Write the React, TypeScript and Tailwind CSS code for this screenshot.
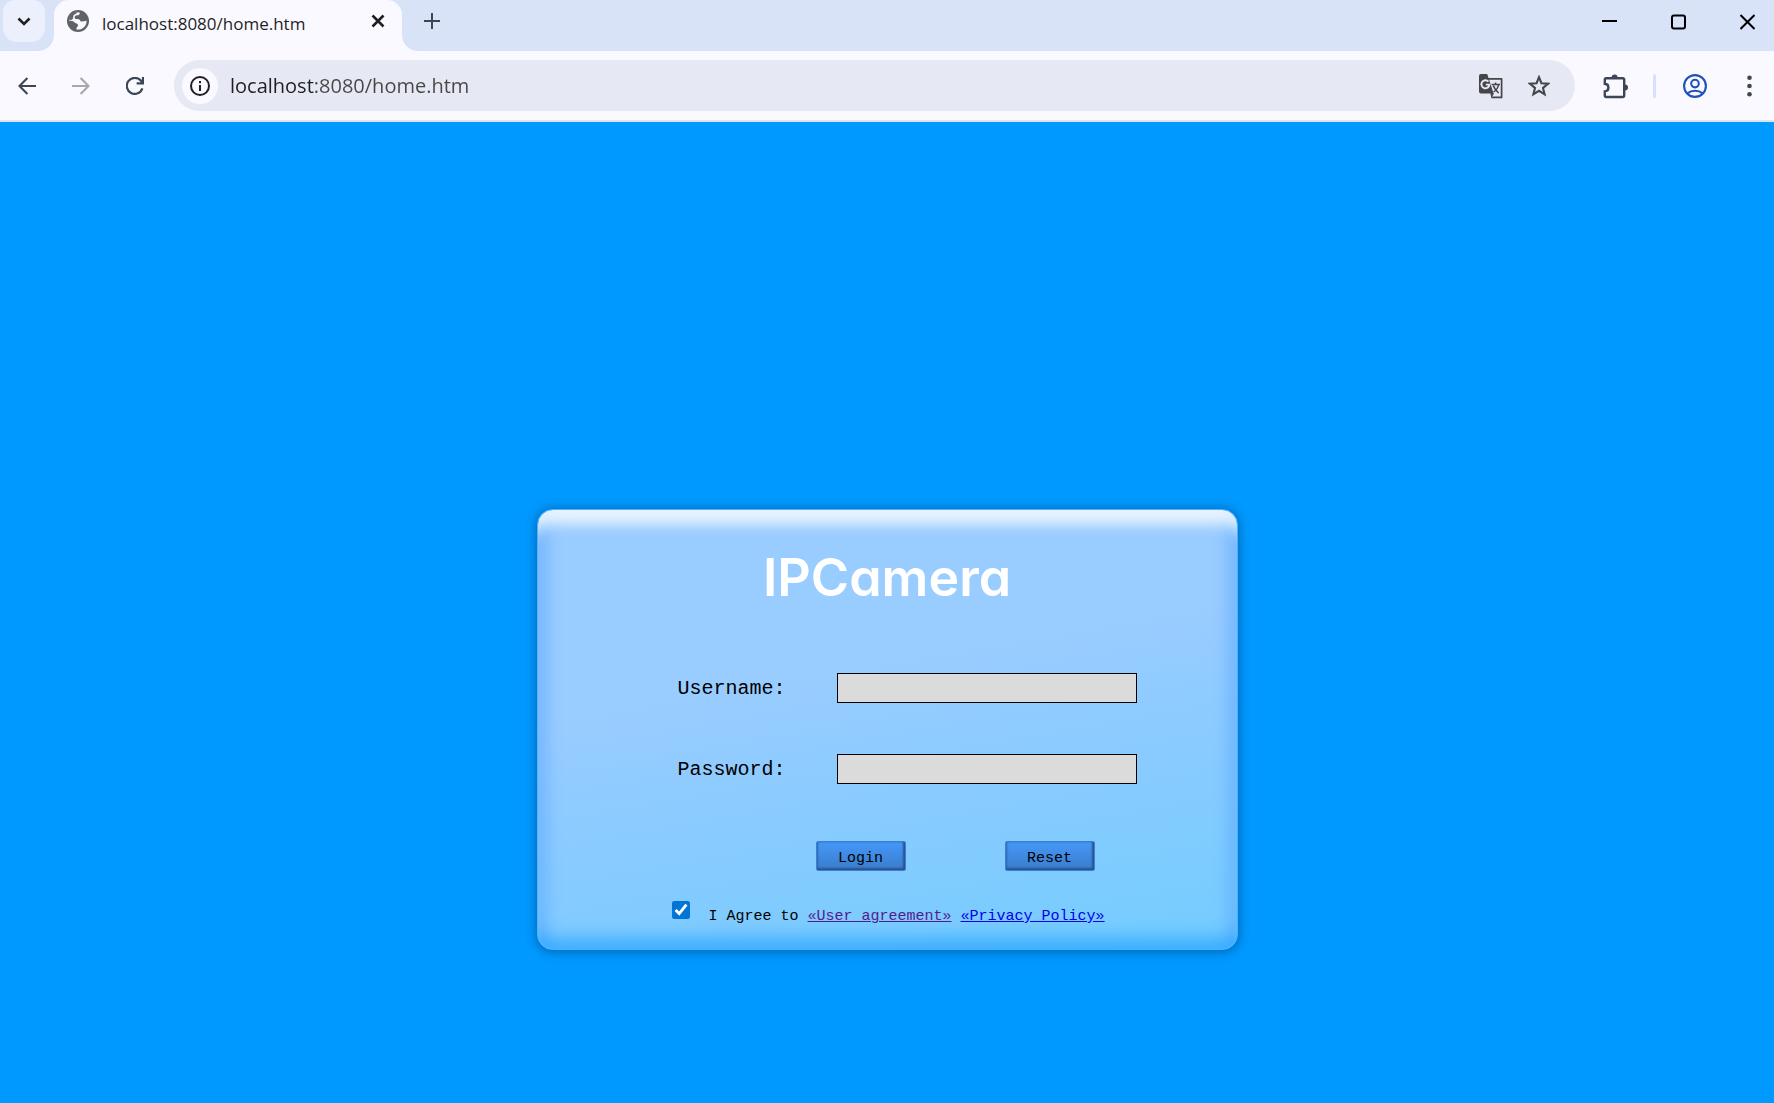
import React from "react";

const stroke = { fill: "none", stroke: "currentColor" } as const;

function Globe() {
  return (
    <svg width="22" height="22" viewBox="2 2 20 20">
      <path
        d="M12 2C6.48 2 2 6.48 2 12s4.48 10 10 10 10-4.48 10-10S17.52 2 12 2zm-1 17.93c-3.95-.49-7-3.85-7-7.93 0-.62.08-1.21.21-1.79L9 15v1c0 1.1.9 2 2 2v1.93zm6.9-2.54c-.26-.81-1-1.39-1.9-1.39h-1v-3c0-.55-.45-1-1-1H8v-2h2c.55 0 1-.45 1-1V7h2c1.1 0 2-.9 2-2v-.41c2.93 1.19 5 4.06 5 7.41 0 2.08-.8 3.97-2.1 5.39z"
        fill="none"
      />
      <circle cx="12" cy="12" r="10" fill="#5f6368" />
      <path
        d="M13.4 4.2C14 5.6 13 6.8 11 6.8C9.4 7 8.8 8 9 9C9.2 10.2 10.2 10.2 11.4 10.2C13.4 10.2 14 11.2 14.4 12.4C15.6 12.6 17.6 12.4 19.8 11.8C20 15.6 17.2 19.2 13.2 19.8C12 20 11 19.9 10.4 19.6C10.8 18.4 10.6 17.6 11.8 16.8C12.6 15.6 11.6 14.4 10.2 14C8.6 13.8 8.6 12.4 7 12L4 11.8C4.2 7.6 7.4 4 12 4Z"
        fill="#faf9ff"
      />
      <path d="M4 11.2C4 7 7.6 4 11.4 4C10.8 5.2 9.6 5.6 8.6 6.2C7.2 7.2 8 9 7.2 10.2C6.4 11 5.2 11.4 4 11.2Z" fill="#5f6368" />
    </svg>
  );
}

function Translate() {
  return (
    <svg width="26" height="26" viewBox="0 0 26 26">
      <path d="M10 5.8H23.6V24.4H13.4" fill="none" stroke="#444649" strokeWidth="1.7" strokeLinejoin="round" />
      <path d="M3 1H9.2L15.6 20.4H3A1.8 1.8 0 0 1 1 18.6V3A2 2 0 0 1 3 1Z M12.4 20.4H16L13.4 25Z" fill="#444649" />
      <path d="M10.4 8.6A4 4 0 1 0 11.4 11.6H7.8" fill="none" stroke="#e6e8f3" strokeWidth="1.9" />
      <path d="M13.6 11.4H22M17.6 9.4V11.4M20.6 11.6C20 14.6 18 17.4 15.6 19M15.2 12.6C16.4 15.6 18.6 18 20.6 20" fill="none" stroke="#444649" strokeWidth="1.5" />
    </svg>
  );
}

function TitleBar() {
  return (
    <div className="flex h-[51px] items-start bg-[#d8e3f7] pl-[3px] text-[#1f1f1f]">
      <button aria-label="Search tabs" className="flex size-[42px] items-center justify-center rounded-b-[14px] rounded-t-[12px] bg-[#ecf0fd]">
        <svg width="14" height="9" viewBox="0 0 14 9" {...stroke} strokeWidth="2.6"><path d="M1.5 1.5L7 7L12.5 1.5" /></svg>
      </button>
      <div className="relative ml-[9px] flex h-[51px] w-[348px] items-center rounded-t-[15px] bg-[#faf9ff] pb-[9px] pl-[13px] pr-[17px]">
        <svg className="absolute bottom-0 -left-4" width="16" height="16"><path d="M16 0V16H0A16 16 0 0 0 16 0Z" fill="#faf9ff" /></svg>
        <svg className="absolute bottom-0 -right-4" width="16" height="16"><path d="M0 0V16H16A16 16 0 0 1 0 0Z" fill="#faf9ff" /></svg>
        <Globe />
        <span className="ml-[13px] flex-1 pt-[5px] text-[17px] leading-6">localhost:8080/home.htm</span>
        <button aria-label="Close tab">
          <svg width="14" height="14" viewBox="0 0 14 14" {...stroke} strokeWidth="2.6"><path d="M1.5 1.5L12.5 12.5M12.5 1.5L1.5 12.5" /></svg>
        </button>
      </div>
      <button aria-label="New tab" className="ml-[22px] mt-[13px] text-[#3c4657]">
        <svg width="16" height="16" viewBox="0 0 16 16" {...stroke} strokeWidth="2"><path d="M8 0V16M0 8H16" /></svg>
      </button>
      <div className="ml-auto flex h-11 items-center gap-[54px] pr-[19px] text-black">
        <button aria-label="Minimize"><svg width="15" height="16" viewBox="0 0 15 16" {...stroke} strokeWidth="2"><path d="M0 7H15" /></svg></button>
        <button aria-label="Maximize"><svg width="15" height="16" viewBox="0 0 15 16" {...stroke} strokeWidth="2"><rect x="1" y="1.5" width="13" height="13" rx="2" /></svg></button>
        <button aria-label="Close"><svg width="15" height="16" viewBox="0 0 15 16" {...stroke} strokeWidth="2"><path d="M.5 1L14.5 15M14.5 1L.5 15" /></svg></button>
      </div>
    </div>
  );
}

function Toolbar() {
  return (
    <div className="flex h-[71px] items-center border-b-2 border-[#e0e3ea] bg-[#faf9ff] pl-[18px] pr-[22px] text-[#3c4657]">
      <button aria-label="Back">
        <svg width="18" height="18" viewBox="0 0 18 18" {...stroke} strokeWidth="2.1"><path d="M18 9H1.8M9.4 .9L1.5 9L9.4 17.1" /></svg>
      </button>
      <button aria-label="Forward" className="ml-9 text-[#a8a8ab]">
        <svg width="18" height="18" viewBox="0 0 18 18" {...stroke} strokeWidth="2.1"><path d="M0 9H16.2M8.6 .9L16.5 9L8.6 17.1" /></svg>
      </button>
      <button aria-label="Reload" className="ml-9">
        <svg width="18" height="18" viewBox="0 0 18 18" {...stroke} strokeWidth="2.2"><path d="M16.4 11.4A8 8 0 1 1 14.8 3.6L17 6M17 0V6.4H10.6" /></svg>
      </button>
      <div className="ml-[30px] flex h-[51px] flex-1 items-center rounded-full bg-[#e6e8f3] pl-2 pr-[25px]">
        <button aria-label="View site information" className="flex size-9 shrink-0 items-center justify-center rounded-full bg-[#faf9ff] text-[#1f1f1f]">
          <svg width="20" height="20" viewBox="0 0 20 20" {...stroke} strokeWidth="2"><circle cx="10" cy="10" r="9" /><path d="M10 9V15M10 5V7.2" /></svg>
        </button>
        <input
          aria-label="Address"
          defaultValue="localhost:8080/home.htm"
          className="ml-3 min-w-0 flex-1 bg-[linear-gradient(90deg,#1f1f1f_84px,#474747_84px)] bg-clip-text text-[20px] leading-7 text-transparent caret-black outline-none"
        />
        <button aria-label="Translate this page"><Translate /></button>
        <button aria-label="Bookmark this tab" className="ml-6 text-[#444649]">
          <svg width="22" height="22" viewBox="0 0 22 22" {...stroke} strokeWidth="2.1"><path d="M11 2.2L13.4 8.2L20 8.7L15 12.9L16.6 19.3L11 15.8L5.4 19.3L7 12.9L2 8.7L8.6 8.2Z" /></svg>
        </button>
      </div>
      <button aria-label="Extensions" className="ml-[28px]">
        <svg width="26" height="26" viewBox="0 0 26 26"><path d="M3 5.2H20A1.2 1.2 0 0 1 21.2 6.4V22.8A1.2 1.2 0 0 1 20 24H3A1.2 1.2 0 0 1 1.8 22.8V18.4C6.6 18.2 6.6 11 1.8 10.8V6.4A1.2 1.2 0 0 1 3 5.2Z" {...stroke} strokeWidth="2.4" /><path d="M8.6 4.4A3 3 0 0 1 14.6 4.4ZM22 11.6A3 3 0 0 1 22 17.6Z" fill="currentColor" /></svg>
      </button>
      <div className="ml-6 h-6 w-[3px] rounded-full bg-[#d6e2fb]" />
      <button aria-label="Profile" className="ml-[27px] text-[#1f51bd]">
        <svg width="24" height="24" viewBox="0 0 24 24" {...stroke} strokeWidth="2.1"><circle cx="12" cy="12" r="10.9" /><circle cx="12" cy="9.6" r="3.8" /><path d="M4.4 19.4C8.6 15.8 15.4 15.8 19.6 19.4" /></svg>
      </button>
      <button aria-label="Menu" className="ml-10">
        <svg width="5" height="22" viewBox="0 0 5 22" fill="currentColor"><circle cx="2.5" cy="2.7" r="2.3" /><circle cx="2.5" cy="11" r="2.3" /><circle cx="2.5" cy="19.3" r="2.3" /></svg>
      </button>
    </div>
  );
}

const buttonClass =
  "h-[30px] w-[90px] rounded-[2px] border border-[#3a7fd4] bg-linear-to-b from-[#4598f8] to-[#3a7ccc] pt-[5px] text-[15px] leading-5 shadow-[inset_-2px_-2px_2px_#2a5590,inset_1px_0_2px_#2d66ad]";

function Field({ id, label, type }: { id: string; label: string; type: string }) {
  return (
    <div className="flex items-center">
      <label htmlFor={id} className="w-[159px] pt-[2px] text-[20px] leading-7">{label}</label>
      <input id={id} type={type} className="h-[30px] w-[300px] border border-black bg-[#dbdbdb] px-1 text-[18px] outline-none" />
    </div>
  );
}

function LoginCard() {
  return (
    <form
      onSubmit={(e) => e.preventDefault()}
      className="w-[701px] rounded-[16px] border border-[#4eb0ff] bg-[linear-gradient(170deg,#99ccff_0%,#99ccff_38%,#8ccbff_58%,#73ccff_100%)] pb-[15px] pl-[140px] font-['Liberation_Mono','Noto_Sans_CJK_SC',monospace] text-black shadow-[0_1px_10px_2px_rgba(0,60,120,0.45),inset_0_22px_14px_-8px_rgba(255,255,255,0.8),inset_0_-18px_16px_-6px_rgba(40,165,255,0.7),inset_18px_0_14px_-8px_rgba(90,165,255,0.45),inset_-18px_0_14px_-8px_rgba(90,165,255,0.45)]"
    >
      <h1 className="-ml-[140px] pt-[35px] text-center font-['Inter',sans-serif] text-[52px] font-semibold leading-[66px] text-white [font-feature-settings:'cv11']">IPCamera</h1>
      <div className="mt-[62px] flex flex-col gap-[51px]">
        <Field id="username" label="Username:" type="text" />
        <Field id="password" label="Password:" type="password" />
      </div>
      <div className="mt-[57px] flex gap-[99px] pl-[138px]">
        <button type="submit" className={buttonClass}>Login</button>
        <button type="reset" className={buttonClass}>Reset</button>
      </div>
      <div className="mt-[29px] flex items-start text-[15px] leading-[34px]">
        <input id="agree" type="checkbox" defaultChecked className="-ml-[6px] mt-px size-[18px] accent-[#0075d6]" />
        <label htmlFor="agree" className="ml-[19px] whitespace-pre">I Agree to </label>
        <a href="#agreement" className="text-[#551a8b] underline">«User agreement»</a>
        <a href="#privacy" className="ml-[9px] text-[#0000ee] underline">«Privacy Policy»</a>
      </div>
    </form>
  );
}

export default function App() {
  return (
    <div className="flex min-h-screen flex-col bg-[#0099ff] font-['Open_Sans','Noto_Sans',sans-serif]">
      <header>
        <TitleBar />
        <Toolbar />
      </header>
      <main className="flex justify-center pt-[387px]">
        <LoginCard />
      </main>
    </div>
  );
}
